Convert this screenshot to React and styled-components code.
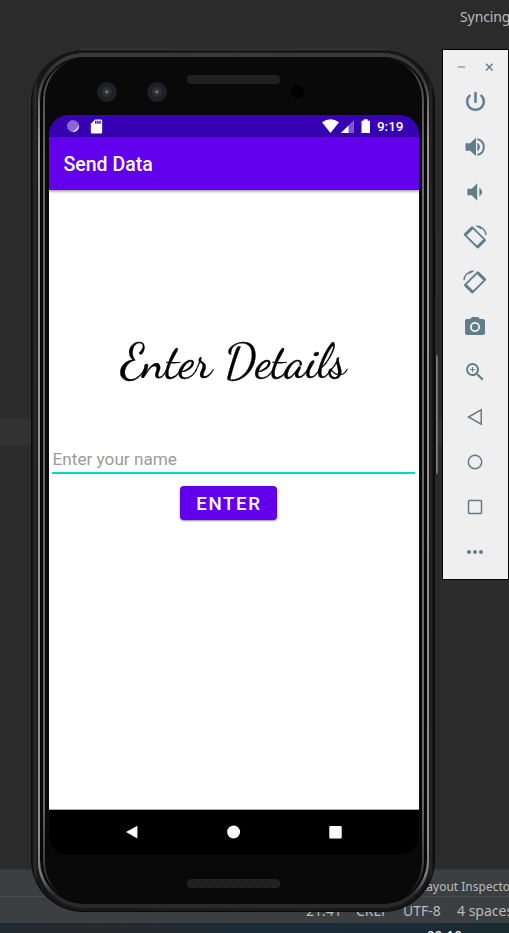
import React from 'react';
import styled, { createGlobalStyle } from 'styled-components';
import { MdPowerSettingsNew, MdVolumeDown, MdPhotoCamera, MdZoomIn, MdMoreHoriz, MdSdCard } from 'react-icons/md';

const Global = createGlobalStyle`
  * { box-sizing: border-box; }
  body { margin: 0; overflow: hidden; background: #2b2b2b; }
`;

const Desktop = styled.div`
  position: relative;
  width: 509px;
  height: 933px;
  overflow: hidden;
  display: flex;
  flex-direction: column;
  background: #2b2b2b;
  font-family: 'Noto Sans', sans-serif;
  color: #bbbbbb;
`;

const Editor = styled.div`
  height: 869px;
  display: flex;
  flex-direction: column;
`;

const SyncRow = styled.div`
  height: 419px;
  padding: 7px 0 0 460px;
  font-size: 14px;
  line-height: 20px;
  letter-spacing: -0.1px;
  white-space: nowrap;
`;

const CaretLine = styled.div`
  height: 26px;
  background: #323232;
`;

const ToolStripe = styled.div`
  height: 28px;
  background: #3c3f41;
  border-top: 1px solid #353535;
  border-bottom: 1px solid #484a4c;
  padding: 8px 0 0 420px;
  font-size: 12px;
  line-height: 18px;
  white-space: nowrap;
`;

const StatusLine = styled.div`
  height: 26px;
  display: grid;
  grid-template-columns: 50px 47px 54px 60px;
  padding-left: 306px;
  background: #3c3f41;
  font-size: 14px;
  line-height: 27px;
  white-space: nowrap;
`;

const Taskbar = styled.div`
  height: 10px;
  padding: 4px 0 0 427px;
  overflow: hidden;
  background: linear-gradient(90deg, #202a31 0%, #28292b 20%, #1b2c39 50%, #1b2931 100%);
  color: #fff;
  font: 500 13px/16px 'Noto Sans', sans-serif;
  letter-spacing: 0.4px;
  white-space: nowrap;
`;

const Phone = styled.div`
  position: absolute;
  left: 31px;
  top: 49px;
  width: 404px;
  height: 863px;
  border-radius: 52px;
  padding: 1px;
  background: #0a0a0a;
  box-shadow: inset 0 1px 0 #3c3c3c;
`;

const Bezel = styled.div`
  width: 100%;
  height: 100%;
  border-radius: 51px;
  padding: 3px 5px 3px 6px;
  background: linear-gradient(90deg, #111 0, #2c2c2c 3px, #161616 6px, #1c1c1c 50%, #161616 396px, #262626 399px, #0a0a0a 402px);
`;

const Rim = styled.div`
  height: 100%;
  border-radius: 46px;
  padding: 4px 2px;
  background: linear-gradient(180deg, #3a3a3a 0, #333 24px, #777 55px, #999 90px, #8d8d8d 790px, #777 822px, #292929 842px);
`;

const Groove = styled.div`
  height: 100%;
  border-radius: 44px;
  padding: 0 3px;
  background: #070707;
`;

const Sheen = styled.div`
  height: 100%;
  border-radius: 42px;
  padding: 1px 2px;
  background: linear-gradient(180deg, #090909 0, #4b4b50 25px, #68686c 100px, #68686c 740px, #3c3c40 810px, #090909 840px);
`;

const Glass = styled.div`
  height: 100%;
  border-radius: 41px;
  background: #090909;
  display: flex;
  flex-direction: column;
  align-items: center;
`;

const Forehead = styled.div`
  width: 370px;
  height: 57px;
  flex: none;
  display: grid;
  grid-template-columns: 48px 50px 40px 93px 11px 13px;
  align-items: start;
  padding-top: 17px;
`;

const Lens = styled.div`
  width: 20px;
  height: 20px;
  margin-top: 7px;
  border-radius: 50%;
  border: 4px solid #1b2127;
  background: radial-gradient(circle at 48% 48%, #74747b 0 1px, #303036 2px, #2e2e35 4px, #1b2127 6px);
`;

const Speaker = styled.div`
  width: 93px;
  height: 9px;
  border-radius: 4px;
  background: repeating-conic-gradient(#2b2b2b 0 25%, #171717 0 50%) 0 0 / 2px 2px;
`;

const Sensor = styled.div`
  width: 13px;
  height: 13px;
  margin-top: 10px;
  border-radius: 50%;
  background: #000;
`;

const Screen = styled.div`
  width: 370px;
  height: 740px;
  flex: none;
  border-radius: 20px;
  overflow: hidden;
  display: flex;
  flex-direction: column;
  background: linear-gradient(#3700b3 0 50%, #000 50%);
  font-family: Roboto, sans-serif;
`;

const SystemBar = styled.div`
  height: 22px;
  flex: none;
  display: flex;
  align-items: center;
  padding: 0 15px 0 17px;
  background: #3700b3;
  color: #fff;
  font-size: 13.5px;
  font-weight: 500;
`;

const SystemIcons = styled.div`
  display: flex;
  align-items: center;
  gap: ${(p) => p.$gap}px;
  margin-left: ${(p) => (p.$end ? 'auto' : 0)};
  svg { display: block; }
`;

const AppBar = styled.div`
  position: relative;
  z-index: 1;
  height: 53px;
  flex: none;
  padding: 1px 15px 0;
  background: #6200ee;
  box-shadow: 0 1px 3px rgba(0, 0, 0, 0.5);
  color: #fff;
  font-size: 19.5px;
  font-weight: 500;
  line-height: 54px;
`;

const Content = styled.div`
  height: 619px;
  flex: none;
  display: flex;
  flex-direction: column;
  align-items: center;
  background: #fff;
`;

const Heading = styled.h1`
  margin: 142px 0 0 5px;
  width: 230px;
  height: 60px;
  font: 400 48.2px/60px 'Dancing Script', cursive;
  color: #000;
  -webkit-text-stroke: 0.3px #000;
  white-space: nowrap;
`;

const NameField = styled.input`
  width: 363px;
  height: 33px;
  margin-top: 49px;
  padding: 4px 1px 0;
  margin-right: 1px;
  border: 0;
  border-bottom: 2px solid #03dac5;
  outline: 0;
  background: transparent;
  font: 400 17.2px Roboto, sans-serif;
  &::placeholder { color: #9b9b9b; opacity: 1; }
`;

const EnterButton = styled.button`
  width: 97px;
  height: 34px;
  margin: 12px 11px 0 0;
  padding: 1px 0 0 2px;
  border: 0;
  border-radius: 4px;
  background: #6200ee;
  box-shadow: 0 1px 2px rgba(0, 0, 0, 0.45);
  color: #fff;
  font: 500 18.7px Roboto, sans-serif;
  letter-spacing: 1.65px;
`;

const NavBar = styled.div`
  height: 46px;
  flex: none;
  border-top: 1px solid #aaa;
  display: grid;
  grid-template-columns: repeat(3, 102px);
  justify-content: center;
  align-items: center;
  justify-items: center;
  padding: 0 0 2px 0;
  background: #000;
  svg { display: block; }
`;

const Chin = styled.div`
  flex: none;
  padding-top: 24px;
`;

const SideKey = styled.div`
  position: absolute;
  left: 434px;
  top: ${(p) => p.$top}px;
  width: 4px;
  height: ${(p) => p.$height}px;
  border-radius: 0 2px 2px 0;
  background: ${(p) => p.$bright
    ? 'linear-gradient(90deg, #151515 40%, #898989 50%, #5b5b5b)'
    : 'linear-gradient(90deg, #111 33%, #3a3a3a 50%, #242424)'};
`;

const Controls = styled.div`
  position: absolute;
  left: 442px;
  top: 49px;
  width: 67px;
  height: 531px;
  border: 1px solid #000;
  background: #efefef;
  color: #607d8b;
  display: flex;
  flex-direction: column;
`;

const WindowButtons = styled.div`
  height: 29px;
  padding: 13px 14px 0 14px;
  display: flex;
  justify-content: space-between;
  svg { display: block; }
`;

const ControlButton = styled.button`
  width: 64px;
  height: 45px;
  flex: none;
  padding: 0;
  border: 0;
  background: transparent;
  color: inherit;
  display: grid;
  place-items: center;
  svg { display: block; }
`;

const RotateIcon = ({ mirrored }) => (
  <svg width="24" height="24" viewBox="0 0 24 24" fill="none" stroke="currentColor">
    <g transform={mirrored ? 'matrix(-1 0 0 1 24 0)' : undefined}>
      <path d="M9.2 2.2 1.6 9.6 14.7 22.5 22.2 15.2Z" strokeWidth="1.8" strokeLinejoin="round" />
      <path d="M9.2 3.1 2.5 9.6M21.3 15.2 14.7 21.7" strokeWidth="2.8" />
      <path d="M14 1.4C19.2 1.4 22.8 5.2 23 10.2" strokeWidth="1.4" />
      <path d="M12 .7h5l2.2 4Z" fill="currentColor" stroke="none" />
    </g>
  </svg>
);

const shapes = {
  back: <path d="M18.2 4.9v14.2L5.5 12Z" />,
  home: <circle cx="12" cy="12" r="6.7" />,
  recent: <rect x="5.5" y="5.5" width="13" height="13" rx="0.8" />,
};

const Outline = ({ shape }) => (
  <svg width="24" height="24" viewBox="0 0 24 24" fill="none" stroke="currentColor" strokeWidth="1.5">
    {shapes[shape]}
  </svg>
);

const VolumeUpIcon = () => (
  <svg width="24" height="24" viewBox="0 0 24 24" fill="currentColor">
    <path d="M2.5 8.3h4.7L13 2.8v18.4l-5.8-5.5H2.5Z" />
    <path d="M14.3 7.8c3.5 1.4 3.5 7 0 8.4Z" />
    <path d="M14.3 4.1c8.7 2 8.7 13.8 0 15.8" fill="none" stroke="currentColor" strokeWidth="2" />
  </svg>
);

const PowerIcon = styled(MdPowerSettingsNew)`
  path:last-of-type { stroke: currentColor; stroke-width: 0.5; }
`;

const controls = [
  ['Power', <PowerIcon size={25} />],
  ['Volume up', <VolumeUpIcon />],
  ['Volume down', <MdVolumeDown size={26} />],
  ['Rotate left', <RotateIcon />],
  ['Rotate right', <RotateIcon mirrored />],
  ['Take screenshot', <MdPhotoCamera size={24} />],
  ['Zoom', <MdZoomIn size={24} />],
  ['Back', <Outline shape="back" />],
  ['Home', <Outline shape="home" />],
  ['Overview', <Outline shape="recent" />],
  ['More', <MdMoreHoriz size={24} />],
];

export default function App() {
  return (
    <>
      <Global />
      <Desktop>
        <Editor>
          <SyncRow>Syncing</SyncRow>
          <CaretLine />
        </Editor>
        <ToolStripe>Layout Inspector</ToolStripe>
        <StatusLine>
          <span>21:41</span><span>CRLF</span><span>UTF-8</span><span>4 spaces</span>
        </StatusLine>
        <Taskbar>00:10</Taskbar>

        <SideKey $top={235} $height={60} />
        <SideKey $top={355} $height={119} $bright />
        <Phone>
          <Bezel><Rim><Groove><Sheen><Glass>
            <Forehead>
              <span />
              <Lens /><Lens /><Speaker /><span /><Sensor />
            </Forehead>
            <Screen>
              <SystemBar>
                <SystemIcons $gap={8}>
                  <svg width="14" height="14" viewBox="0 0 14 14">
                    <circle cx="7" cy="7" r="5.6" fill="#8967d0" stroke="#a68ae0" strokeDasharray="1 1" />
                    <path d="M12.9 6.5A6 6 0 0 1 6.5 12.9Q10.8 11.3 12.9 6.5" fill="#fff" stroke="#fff" strokeWidth="0.3" />
                  </svg>
                  <MdSdCard size={17} />
                </SystemIcons>
                <SystemIcons $gap={5} $end>
                  <svg width="50" height="16" viewBox="0 0 50 16" fill="#fff">
                    <path d="M0 4.2Q8.5-1.8 17 4.2L8.5 15Z" />
                    <path d="M32 2v13H19Z" opacity=".35" />
                    <path d="M26.5 7.5V15H19Z" />
                    <path d="M39.5 2.7h2.2V1.2h4v1.5H48v12.4h-8.5Z" />
                  </svg>
                  <span>9:19</span>
                </SystemIcons>
              </SystemBar>
              <AppBar>Send Data</AppBar>
              <Content>
                <Heading>Enter Details</Heading>
                <NameField placeholder="Enter your name" aria-label="Name" />
                <EnterButton>ENTER</EnterButton>
              </Content>
              <NavBar>
                <svg width="14" height="14" viewBox="0 0 14 14" fill="#fff"><path d="M12.4.7v12.8L1 7Z" /></svg>
                <svg width="14" height="14" viewBox="0 0 14 14" fill="#fff"><circle cx="6.6" cy="7" r="6.5" /></svg>
                <svg width="14" height="14" viewBox="0 0 14 14" fill="#fff"><rect x=".3" y="1" width="12.4" height="12.4" rx="1" /></svg>
              </NavBar>
            </Screen>
            <Chin><Speaker /></Chin>
          </Glass></Sheen></Groove></Rim></Bezel>
        </Phone>

        <Controls>
          <WindowButtons>
            <svg width="9" height="9" viewBox="0 0 9 9" stroke="#90a4ae" strokeWidth="1.5"><path d="M.5 4h7.5" /></svg>
            <svg width="9" height="9" viewBox="0 0 9 9" stroke="#607d8b" strokeWidth="1.4"><path d="m1 .8 6.6 6.6M7.6.8 1 7.4" /></svg>
          </WindowButtons>
          {controls.map(([label, icon]) => (
            <ControlButton key={label} aria-label={label}>{icon}</ControlButton>
          ))}
        </Controls>
      </Desktop>
    </>
  );
}
